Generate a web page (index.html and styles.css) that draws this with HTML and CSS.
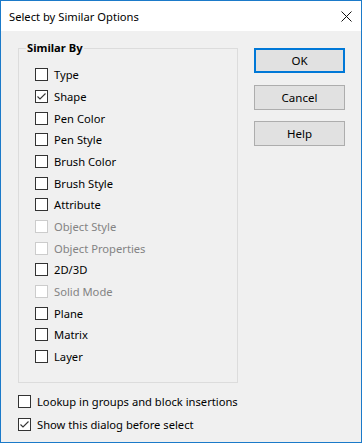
FILE: index.html
```html
<!DOCTYPE html>
<html lang="en">
<head>
    <meta charset="UTF-8">
    <title>Select by Similar Options</title>
    <link rel="stylesheet" href="styles.css">
</head>
<body>
    <div class="window">
        <div class="titlebar">
            <span class="title">Select by Similar Options</span>
            <svg class="close" width="11" height="11" viewBox="0 0 11 11">
                <path d="M0.5 0.5 L10.5 10.5 M10.5 0.5 L0.5 10.5" stroke="#111" stroke-width="1" fill="none"/>
            </svg>
        </div>

        <div class="content">
            <div class="main">
                <fieldset class="group">
                    <legend>Similar By</legend>
                    <div class="check"><span class="box"></span>Type</div>
                    <div class="check"><span class="box"><svg width="11" height="11" viewBox="0 0 11 11"><path d="M1.5 5.5 L4 8 L9.5 2.5" stroke="#333" stroke-width="1.1" fill="none"/></svg></span>Shape</div>
                    <div class="check"><span class="box"></span>Pen Color</div>
                    <div class="check"><span class="box"></span>Pen Style</div>
                    <div class="check"><span class="box"></span>Brush Color</div>
                    <div class="check"><span class="box"></span>Brush Style</div>
                    <div class="check"><span class="box"></span>Attribute</div>
                    <div class="check disabled"><span class="box"></span>Object Style</div>
                    <div class="check disabled"><span class="box"></span>Object Properties</div>
                    <div class="check"><span class="box"></span>2D/3D</div>
                    <div class="check disabled"><span class="box"></span>Solid Mode</div>
                    <div class="check"><span class="box"></span>Plane</div>
                    <div class="check"><span class="box"></span>Matrix</div>
                    <div class="check"><span class="box"></span>Layer</div>
                </fieldset>

                <div class="buttons">
                    <button class="default">OK</button>
                    <button>Cancel</button>
                    <button>Help</button>
                </div>
            </div>

            <div class="options">
                <div class="check"><span class="box"></span>Lookup in groups and block insertions</div>
                <div class="check"><span class="box"><svg width="11" height="11" viewBox="0 0 11 11"><path d="M1.5 5.5 L4 8 L9.5 2.5" stroke="#333" stroke-width="1.1" fill="none"/></svg></span>Show this dialog before select</div>
            </div>
        </div>
    </div>
</body>
</html>
```

FILE: styles.css
```css
* {
    box-sizing: border-box;
}
body {
    margin: 0;
    font-family: "Noto Sans", "Open Sans", sans-serif;
    font-size: 11.2px;
    color: #000;
}
.window {
    width: 362px;
    height: 443px;
    border: 1px solid #1b7ac9;
    background-color: #f0f0f0;
}
.titlebar {
    height: 30px;
    background-color: #fff;
    display: flex;
    align-items: center;
    justify-content: space-between;
    padding: 0 9px 0 8px;
}
.close {
    margin-top: 1px;
}
.content {
    padding: 9px 16px 0 17px;
}
.main {
    display: flex;
    gap: 16px;
}
.group {
    width: 220px;
    height: 343px;
    margin: 0;
    padding: 8px 0 0 0;
    border: 1px solid #dcdcdc;
}
.group .check {
    padding-left: 16px;
}
legend {
    font-weight: bold;
    margin-left: 7px;
    padding: 0 1px;
    line-height: 16px;
}
.check {
    display: flex;
    align-items: center;
    gap: 6px;
    height: 21.67px;
}
.box {
    width: 13px;
    height: 13px;
    border: 1px solid #333;
    background-color: #fff;
    display: flex;
    align-items: center;
    justify-content: center;
}
.disabled {
    color: #838383;
}
.disabled .box {
    border-color: #cccccc;
}
.buttons {
    display: flex;
    flex-direction: column;
    gap: 11.5px;
    margin-top: 8px;
}
button {
    width: 91px;
    height: 25px;
    background-color: #e1e1e1;
    border: 1px solid #adadad;
    font-family: inherit;
    font-size: 11.5px;
    color: #000;
    padding: 0;
}
button.default {
    border: 2px solid #0078d7;
}
.options {
    margin-top: 7px;
}
.options .check {
    height: 23px;
}
```
